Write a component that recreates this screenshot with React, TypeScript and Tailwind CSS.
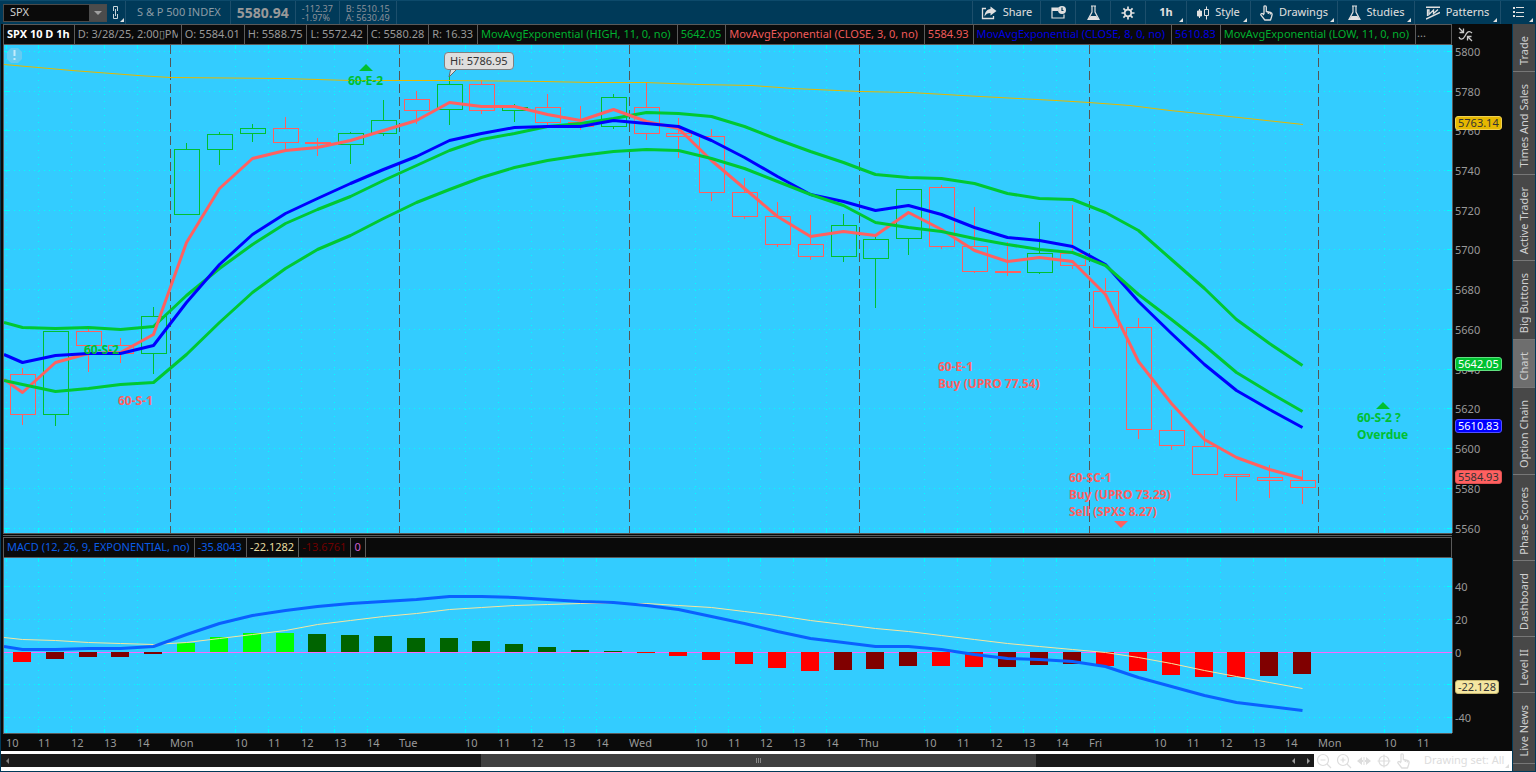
import type { ReactNode } from 'react';
import clsx from 'clsx';

// Both panes are drawn on one canvas, 1448 units wide
const PANE = { left: 4, width: 1448 };
const PRICE = { top: 45, height: 488 };
const MACD = { top: 558, height: 175 };

const BAR_STEP = 32.82;
const FIRST_BAR = 22.5;
const FIRST_GRID = 6;
const ZERO_Y = 652;

const barX = (i: number) => Math.floor(FIRST_BAR + BAR_STEP * i) + 0.5;
const gridX = (k: number) => Math.floor(FIRST_GRID + BAR_STEP * k);
const priceY = (price: number) => Math.floor(51.27 + (5800 - price) * 1.987) + 0.5;

const xPct = (x: number) => `${((x - PANE.left) / PANE.width) * 100}%`;
const yPct = (y: number, pane: { top: number; height: number }) => `${((y - pane.top) / pane.height) * 100}%`;

type Dir = 'u' | 'd';
type Candle = [Dir, number, number, number, number];

// direction, high, body top, body bottom, low
const candles: Candle[] = [
  ['d', 368, 374, 414, 425],
  ['u', 331, 331, 414, 426],
  ['d', 329, 331, 345, 372],
  ['d', 338, 345, 353, 363],
  ['u', 307, 316, 353, 374],
  ['u', 143, 149, 214, 214],
  ['u', 132, 134, 149, 165],
  ['u', 124, 128, 133, 142],
  ['d', 117, 128, 142, 150],
  ['d', 138, 142, 143, 156],
  ['u', 132, 133, 144, 164],
  ['u', 100, 120, 133, 136],
  ['d', 91, 99, 110, 124],
  ['u', 77, 84, 109, 125],
  ['d', 80, 84, 110, 114],
  ['u', 104, 107, 110, 122],
  ['d', 94, 107, 122, 125],
  ['d', 106, 122, 126, 130],
  ['u', 94, 97, 126, 129],
  ['d', 82, 107, 133, 140],
  ['d', 118, 133, 136, 158],
  ['d', 129, 136, 192, 201],
  ['d', 178, 192, 216, 219],
  ['d', 202, 216, 244, 247],
  ['d', 215, 244, 256, 260],
  ['u', 214, 225, 256, 262],
  ['u', 236, 239, 258, 308],
  ['u', 189, 189, 238, 255],
  ['d', 185, 187, 246, 249],
  ['d', 207, 246, 271, 273],
  ['d', 242, 271, 272, 276],
  ['u', 222, 253, 272, 274],
  ['d', 205, 253, 265, 269],
  ['d', 278, 291, 327, 329],
  ['d', 318, 327, 429, 439],
  ['d', 410, 430, 445, 450],
  ['d', 430, 446, 474, 475],
  ['d', 474, 474, 476, 501],
  ['d', 465, 477, 480, 498],
  ['d', 470, 480, 487, 504],
];

// The first value sits on the left edge, the rest on the bars
const emaClose3 = [
  379, 392, 362, 353, 352, 334, 242, 188, 158, 150, 147, 140, 130, 120, 102, 106, 106, 114, 120, 109, 121, 128, 160,
  188, 216, 236, 231, 235, 212, 229, 250, 261, 257, 261, 294, 361, 403, 439, 457, 469, 478,
];
const emaClose8 = [
  354, 362, 355, 353, 353, 345, 302, 264, 234, 213, 198, 183, 169, 156, 140, 133, 127, 126, 126, 120, 123, 126, 140,
  157, 176, 194, 201, 210, 205, 214, 227, 237, 240, 246, 264, 301, 333, 364, 390, 409, 427,
];
const emaHigh = [
  322, 327, 328, 327, 329, 326, 295, 268, 244, 223, 209, 196, 180, 165, 150, 139, 133, 126, 123, 118, 112, 113, 116,
  126, 139, 151, 162, 174, 177, 178, 183, 193, 198, 199, 212, 230, 259, 288, 319, 343, 365,
];
const emaLow = [
  380, 384, 391, 388, 384, 382, 354, 322, 292, 268, 249, 235, 218, 202, 189, 177, 167, 160, 155, 151, 149, 150, 158,
  168, 181, 194, 205, 222, 227, 231, 238, 244, 249, 252, 265, 294, 319, 345, 372, 392, 411,
];
const macdLine = [
  646, 649, 649, 648, 648, 646, 634, 623, 615, 610, 606, 603, 601, 599, 596, 596, 597, 599, 601, 602, 605, 609, 616,
  623, 631, 638, 642, 646, 646, 649, 654, 658, 659, 661, 666, 677, 686, 695, 702, 706, 710,
];
const signalLine = [
  637, 639, 640, 642, 643, 644, 642, 638, 634, 630, 624, 620, 616, 613, 609, 607, 605, 604, 603, 603, 603, 605, 607,
  611, 615, 620, 624, 628, 631, 635, 639, 643, 646, 649, 652, 657, 663, 670, 676, 682, 688,
];

const longAverage =
  '4,64 72,70 138,75 170,77 285,78 350,80 449,80 545,81 590,82 645,82 700,84 752,85 793,88 860,91 910,92 980,96 1056,100 1089,102 1130,105 1170,110 1220,115 1285,122 1303,124';

// colour, outer edge of the bar
const histogram: [string, number][] = [
  ['#ff0000', 662], ['#800000', 659], ['#800000', 657], ['#800000', 657], ['#800000', 654],
  ['#00ff00', 643], ['#00ff00', 637], ['#00ff00', 633], ['#00ff00', 633], ['#006400', 634],
  ['#006400', 635], ['#006400', 636], ['#006400', 638], ['#006400', 638], ['#006400', 641],
  ['#006400', 644], ['#006400', 647], ['#006400', 650], ['#006400', 651], ['#ff0000', 653],
  ['#ff0000', 656], ['#ff0000', 660], ['#ff0000', 664], ['#ff0000', 668], ['#ff0000', 671],
  ['#800000', 670], ['#800000', 669], ['#800000', 666], ['#ff0000', 666], ['#ff0000', 667],
  ['#800000', 667], ['#800000', 665], ['#800000', 664], ['#ff0000', 666], ['#ff0000', 671],
  ['#ff0000', 675], ['#ff0000', 677], ['#ff0000', 677], ['#800000', 676], ['#800000', 674],
];

const dayNames = ['Mon', 'Tue', 'Wed', 'Thu', 'Fri', 'Mon'];

interface TimeMark {
  x: number;
  label: string;
  session: boolean;
}

const timeMarks: TimeMark[] = [];
for (let k = 0; k < 44; k++) {
  const hour = (k + 2) % 7;
  if (hour === 1) continue;
  const session = hour === 0;
  timeMarks.push({
    x: gridX(k),
    label: session ? dayNames[(k - 5) / 7] : String(8 + hour),
    session,
  });
}

const prices = Array.from({ length: 13 }, (_, i) => 5800 - i * 20);
const macdLevels = [
  { label: '40', y: 586.5 },
  { label: '20', y: 619.5 },
  { label: '0', y: 652.5 },
  { label: '', y: 684.5 },
  { label: '-40', y: 717.5 },
];

const linePoints = (ys: number[]) =>
  ys.map((y, i) => (i === 0 ? `${PANE.left},${y + 0.5}` : `${barX(i - 1)},${y + 0.5}`)).join(' ');

interface LegendItem {
  text: string;
  color: string;
  study?: boolean;
}

const priceLegend: LegendItem[] = [
  { text: 'O: 5584.01', color: 'text-[#999999]' },
  { text: 'H: 5588.75', color: 'text-[#999999]' },
  { text: 'L: 5572.42', color: 'text-[#999999]' },
  { text: 'C: 5580.28', color: 'text-[#999999]' },
  { text: 'R: 16.33', color: 'text-[#999999]' },
  { text: 'MovAvgExponential (HIGH, 11, 0, no)', color: 'text-[#00b030]', study: true },
  { text: '5642.05', color: 'text-[#00b030]' },
  { text: 'MovAvgExponential (CLOSE, 3, 0, no)', color: 'text-[#f05a5a]', study: true },
  { text: '5584.93', color: 'text-[#f05a5a]' },
  { text: 'MovAvgExponential (CLOSE, 8, 0, no)', color: 'text-[#0000e0]', study: true },
  { text: '5610.83', color: 'text-[#0000e0]' },
  { text: 'MovAvgExponential (LOW, 11, 0, no)', color: 'text-[#00b030]', study: true },
];

const macdLegend: LegendItem[] = [
  { text: 'MACD (12, 26, 9, EXPONENTIAL, no)', color: 'text-[#0a5ce6]' },
  { text: '-35.8043', color: 'text-[#0a5ce6]' },
  { text: '-22.1282', color: 'text-[#e6dca0]' },
  { text: '-13.6761', color: 'text-[#700000]' },
  { text: '0', color: 'text-[#d060d0]' },
];

const sideTabs = [
  'Trade',
  'Times And Sales',
  'Active Trader',
  'Big Buttons',
  'Chart',
  'Option Chain',
  'Phase Scores',
  'Dashboard',
  'Level II',
  'Live News',
];

function Corner({ className = 'border-b-[#e0e0e0]' }: { className?: string }) {
  return <span className={clsx('absolute bottom-[2px] right-[3px] border-b-4 border-l-4 border-l-transparent', className)} />;
}

function ToolButton({ children, className, menu, label }: { children: ReactNode; className: string; menu?: boolean; label?: string }) {
  return (
    <button
      type="button"
      aria-label={label}
      className={clsx('relative flex h-full items-center justify-center gap-1.5 border-l border-[#1d4f6c] text-[#e0e0e0]', className)}
    >
      {children}
      {menu && <Corner />}
    </button>
  );
}

function ShareIcon() {
  return (
    <svg width="16" height="14" viewBox="0 0 16 14" fill="none">
      <path d="M5 2.5H1.5v10h11V10" stroke="#e0e0e0" strokeWidth="1.3" />
      <path d="M9.5 0.5 15.5 5l-6 4.500V7C6.500 7 5 8 3.500 10.500 3.800 6.500 5.500 3.500 9.500 3z" fill="#e0e0e0" />
    </svg>
  );
}

function NoteClockIcon() {
  return (
    <svg width="15" height="13" viewBox="0 0 15 13" fill="none">
      <path d="M8 2H1v10h12V8.500" stroke="#e0e0e0" strokeWidth="1.200" />
      <path d="M1 2h6v3H1z" fill="#e0e0e0" />
      <circle cx="11" cy="4" r="4" fill="#e0e0e0" />
      <path d="M11 1.500v3h1.500" stroke="#003a59" strokeWidth="1.200" />
    </svg>
  );
}

function FlaskIcon() {
  return (
    <svg width="13" height="16" viewBox="0 0 13 16" fill="none">
      <path d="M4 1h5M5 1v6L1 14.500h11L8 7V1" stroke="#e0e0e0" strokeWidth="1.200" />
      <path d="M3.500 11h6L12 15H1z" fill="#e0e0e0" />
    </svg>
  );
}

function GearIcon() {
  return (
    <svg width="14" height="14" viewBox="0 0 14 14" fill="none" stroke="#e0e0e0">
      <circle cx="7" cy="7" r="3.300" strokeWidth="1.800" />
      <path
        d="M7 0.500v3M7 10.500v3M0.500 7h3M10.500 7h3M2.400 2.400l2 2M9.600 9.600l2 2M11.600 2.400l-2 2M4.400 9.600l-2 2"
        strokeWidth="1.700"
      />
    </svg>
  );
}

function CandlesIcon() {
  return (
    <svg width="12" height="14" viewBox="0 0 12 14" fill="none" stroke="#e0e0e0">
      <path d="M2.500 3v9M9.500 0.500v13" strokeWidth="1" />
      <path d="M0.500 5h4v5h-4z" fill="#e0e0e0" />
      <path d="M7.500 3.500h4v6h-4z" fill="#003a59" />
    </svg>
  );
}

function HandIcon({ color = '#e0e0e0' }: { color?: string }) {
  return (
    <svg width="13" height="16" viewBox="0 0 13 16" fill="none" stroke={color} strokeWidth="1.300" strokeLinejoin="round">
      <path d="M4 9V2c0-1.600 2.300-1.600 2.300 0v4.500l4.200 1c1.100.300 1.700 1 1.600 2L11.500 12l-1 3H4.800L1 10.200c-.700-1.200.800-2.200 1.800-1.400L4 10" />
      <path d="M8.300 7v2M10.300 7.500v2" />
    </svg>
  );
}

function PatternsIcon() {
  return (
    <svg width="14" height="14" viewBox="0 0 14 14" fill="none" stroke="#e0e0e0" strokeWidth="1.400">
      <path d="M0 1.200h14M0 13 14 6.500" />
      <path d="M1.500 10V4H3v4.500L7.500 4v3.500L12 3.500" strokeWidth="1.300" />
    </svg>
  );
}

function ListIcon() {
  return (
    <svg width="11" height="11" viewBox="0 0 11 11" fill="#e0e0e0">
      <path d="M0 0h2v2H0zM3 0h8v1H3zM0 4h2v2H0zM3 5h8v1H3zM0 8h2v2H0zM3 9h8v1H3z" />
    </svg>
  );
}

function LinkIcon() {
  return (
    <svg width="6" height="13" viewBox="0 0 6 13" fill="none" stroke="#c8d4da">
      <path d="M0.500 5V0.500h4V5M0.500 8v4.500h4V8M2.500 3v7" />
    </svg>
  );
}

function TopBar() {
  return (
    <header className="flex h-6 shrink-0 items-center border-t border-[#0d4a6b] bg-[#003a59]">
      <div className="ml-[3px] flex h-[18px] w-[104px] items-center border border-[#4a4a4a] bg-[#0a0a0a]">
        <input
          aria-label="Symbol"
          defaultValue="SPX"
          className="w-full min-w-0 bg-transparent pl-[6px] text-[11px] text-[#d0d0d0] outline-none"
        />
        <button type="button" aria-label="Symbol list" className="flex h-4 w-[17px] shrink-0 items-center justify-center bg-[#4c4c4c]">
          <span className="border-x-4 border-t-4 border-x-transparent border-t-[#a0a0a0]" />
        </button>
      </div>
      <button type="button" aria-label="Link symbol" className="relative flex h-full w-[18px] items-center justify-center">
        <LinkIcon />
        <span className="absolute right-px bottom-[2px] border-b-4 border-l-4 border-b-[#e0e0e0] border-l-transparent" />
      </button>
      <div className="flex h-full items-center border-l border-[#1d4f6c] pr-[9px] pl-[11px] text-[#8b9ba5]">S &amp; P 500 INDEX</div>
      <div className="flex h-full items-center border-l border-[#1d4f6c] px-[6px] text-sm font-bold text-[#999999]">5580.94</div>
      <div className="flex h-full flex-col justify-center border-l border-[#1d4f6c] px-[6px] text-[9px] leading-[9px] text-[#8b9199]">
        <span>-112.37</span>
        <span>-1.97%</span>
      </div>
      <div className="flex h-full flex-col justify-center border-x border-[#1d4f6c] px-[6px] text-[9px] leading-[9px] text-[#8b9199]">
        <span>B: 5510.15</span>
        <span>A: 5630.49</span>
      </div>

      <div className="ml-auto flex h-full">
        <ToolButton className="w-[68px]">
          <ShareIcon />
          <span>Share</span>
        </ToolButton>
        <ToolButton className="w-[35px]" label="Notes">
          <NoteClockIcon />
        </ToolButton>
        <ToolButton className="w-[35px]" label="Edit studies">
          <FlaskIcon />
        </ToolButton>
        <ToolButton className="w-[35px]" label="Settings">
          <GearIcon />
        </ToolButton>
        <ToolButton className="w-[41px]" menu>
          <span className="font-bold">1h</span>
        </ToolButton>
        <ToolButton className="w-[64px]" menu>
          <CandlesIcon />
          <span>Style</span>
        </ToolButton>
        <ToolButton className="w-[87px]" menu>
          <HandIcon />
          <span>Drawings</span>
        </ToolButton>
        <ToolButton className="w-[77px]" menu>
          <FlaskIcon />
          <span>Studies</span>
        </ToolButton>
        <ToolButton className="w-[86px]" menu>
          <PatternsIcon />
          <span>Patterns</span>
        </ToolButton>
        <ToolButton className="w-[36px]" menu label="Menu">
          <ListIcon />
        </ToolButton>
      </div>
    </header>
  );
}

function LegendCell({ text, color, study }: LegendItem) {
  return (
    <div
      className={clsx(
        'flex h-full shrink-0 items-center border-r border-[#5a5a5a] pl-[3px] whitespace-nowrap',
        study ? 'pr-[6px]' : 'pr-1',
        color,
      )}
    >
      {text}
    </div>
  );
}

function Grid({ pane, levels }: { pane: { top: number; height: number }; levels: number[] }) {
  const right = PANE.left + PANE.width;
  const bottom = pane.top + pane.height;
  return (
    <g stroke="#00ffff" shapeRendering="crispEdges">
      {levels.map((y) => (
        <g key={y}>
          <line x1={PANE.left} x2={right} y1={y} y2={y} strokeDasharray="1 4" />
          <path d={`M${PANE.left} ${y}h5M${right - 5} ${y}h5`} />
        </g>
      ))}
      {timeMarks
        .filter((m) => !m.session)
        .map((m) => (
          <g key={m.x}>
            <line x1={m.x + 0.5} x2={m.x + 0.5} y1={pane.top} y2={bottom} strokeDasharray="1 6" />
            <path d={`M${m.x + 0.5} ${pane.top}v4M${m.x + 0.5} ${bottom - 4}v4`} />
          </g>
        ))}
    </g>
  );
}

function Study({ ys, color, width = 3 }: { ys: number[]; color: string; width?: number }) {
  return <polyline points={linePoints(ys)} fill="none" stroke={color} strokeWidth={width} strokeLinejoin="round" />;
}

function Note({ x, y, up, children }: { x: number; y: number; up?: boolean; children: ReactNode }) {
  return (
    <div
      className={clsx('absolute text-xs leading-[17px] font-bold whitespace-nowrap', up ? 'text-[#00c030]' : 'text-[#ff6060]')}
      style={{ left: xPct(x), top: yPct(y, PRICE) }}
    >
      {children}
    </div>
  );
}

function PricePane() {
  return (
    <div className="relative min-w-0 flex-1 overflow-hidden border-b border-[#5a5a5a] bg-[#33ccff]">
      <svg
        className="absolute inset-0 h-full w-full"
        viewBox={`${PANE.left} ${PRICE.top} ${PANE.width} ${PRICE.height}`}
        preserveAspectRatio="none"
      >
        <Grid pane={PRICE} levels={prices.map(priceY)} />
        <g stroke="#555555" strokeDasharray="9 4" shapeRendering="crispEdges">
          {timeMarks
            .filter((m) => m.session)
            .map((m) => (
              <line key={m.x} x1={m.x + 0.5} x2={m.x + 0.5} y1={PRICE.top} y2={PRICE.top + PRICE.height} />
            ))}
        </g>
        <g fill="none" shapeRendering="crispEdges">
          {candles.map(([dir, hi, top, bottom, lo], i) => {
            const x = barX(i);
            return (
              <path
                key={i}
                stroke={dir === 'u' ? '#00c030' : '#ff6060'}
                d={`M${x} ${hi}V${top}M${x - 12} ${top + 0.5}h25v${bottom - top}h-25zM${x} ${bottom}V${lo}`}
              />
            );
          })}
        </g>
        <polyline points={longAverage} fill="none" stroke="#e6b800" strokeWidth="1" transform="translate(0 0.5)" />
        <Study ys={emaHigh} color="#00c832" />
        <Study ys={emaClose3} color="#ff6060" />
        <Study ys={emaClose8} color="#0000ff" />
        <Study ys={emaLow} color="#00c832" />
        <path d="M359 71h14l-7-7zM1376 409h14l-7-7z" fill="#00c030" />
        <path d="M1114 521h14l-7 7z" fill="#ff6060" />
        <path d="M451 68l-2 9 9-9" fill="#dedede" stroke="#666666" />
        <path d="M11 48h7l4 4v7l-4 4h-7l-4-4v-7z" fill="#66ccf2" />
        <path d="M14.500 50v6M14.500 58v2" stroke="#c4ecfb" strokeWidth="2" />
      </svg>
      <Note x={348} y={72} up>60-E-2</Note>
      <Note x={84} y={341} up>60-S-2</Note>
      <Note x={118} y={392}>60-S-1</Note>
      <Note x={938} y={358}>
        60-E-1
        <br />
        Buy (UPRO 77.54)
      </Note>
      <Note x={1069} y={469}>
        60-SC-1
        <br />
        Buy (UPRO 73.29)
        <br />
        Sell (SPXS 8.27)
      </Note>
      <Note x={1357} y={409} up>
        60-S-2 ?
        <br />
        Overdue
      </Note>
      <div
        className="absolute flex h-[18px] items-center rounded-[4px] border border-[#808080] bg-[#dedede] px-[5px] whitespace-nowrap text-[#333333]"
        style={{ left: xPct(444), top: yPct(52, PRICE) }}
      >
        Hi: 5786.95
      </div>
    </div>
  );
}

function MacdPane() {
  return (
    <div className="relative min-w-0 flex-1 overflow-hidden border-b border-[#5a5a5a] bg-[#33ccff]">
      <svg
        className="absolute inset-0 h-full w-full"
        viewBox={`${PANE.left} ${MACD.top} ${PANE.width} ${MACD.height}`}
        preserveAspectRatio="none"
      >
        <Grid pane={MACD} levels={macdLevels.filter((l) => l.label !== '0').map((l) => l.y)} />
        <line x1="4" x2="1452" y1="652.5" y2="652.5" stroke="#ff66ff" shapeRendering="crispEdges" />
        {histogram.map(([color, edge], i) => (
          <rect
            key={i}
            x={barX(i) - 9.5}
            width="18"
            y={Math.min(edge, ZERO_Y)}
            height={Math.abs(edge - ZERO_Y)}
            fill={color}
            shapeRendering="crispEdges"
          />
        ))}
        <Study ys={signalLine} color="#f5e6a0" width={1} />
        <Study ys={macdLine} color="#0a60ff" />
      </svg>
    </div>
  );
}

function AxisLabel({ y, pane, children }: { y: number; pane: { top: number; height: number }; children: ReactNode }) {
  return (
    <span className="absolute left-[2px] -translate-y-1/2 leading-[14px]" style={{ top: yPct(y, pane) }}>
      {children}
    </span>
  );
}

function AxisTag({ y, pane, color, children }: { y: number; pane: { top: number; height: number }; color: string; children: ReactNode }) {
  return (
    <span
      className={clsx('absolute left-[2px] flex h-[14px] -translate-y-1/2 items-center rounded-[3px] border px-[2px]', color)}
      style={{ top: yPct(y, pane) }}
    >
      {children}
    </span>
  );
}

function ScrollRow() {
  return (
    <div className="flex h-[20px] shrink-0 items-center bg-white pb-px">
      <div className="flex h-[13px] min-w-0 flex-1 items-center bg-[#1a1a1a]">
        <button type="button" aria-label="Scroll left" className="flex h-full w-3 items-center justify-center">
          <span className="border-y-[3px] border-r-[3px] border-y-transparent border-r-[#808080]" />
        </button>
        <div className="h-full flex-[468]" />
        <div className="flex h-full flex-[555] items-center justify-center gap-px bg-[#404040]">
          <span className="h-[5px] w-px bg-[#888888]" />
          <span className="h-[5px] w-px bg-[#888888]" />
          <span className="h-[5px] w-px bg-[#888888]" />
        </div>
        <div className="flex h-full flex-[274] items-center justify-end gap-3 pr-1">
          <button type="button" aria-label="Step left" className="border-y-[3px] border-r-[3px] border-y-transparent border-r-[#999999]" />
          <button type="button" aria-label="Step right" className="border-y-[3px] border-l-[3px] border-y-transparent border-l-[#999999]" />
        </div>
      </div>
      <div className="relative flex h-full w-[198px] shrink-0 items-center gap-1 pl-[2px] text-[#dddddd]">
        <button type="button" aria-label="Zoom out">
          <svg width="16" height="18" viewBox="0 0 16 18" fill="none" stroke="#dddddd" strokeWidth="1.200">
            <circle cx="7" cy="8" r="5.500" />
            <path d="M4.500 8h5M11 12l4 4" />
          </svg>
        </button>
        <button type="button" aria-label="Zoom in">
          <svg width="16" height="18" viewBox="0 0 16 18" fill="none" stroke="#dddddd" strokeWidth="1.200">
            <circle cx="7" cy="8" r="5.500" />
            <path d="M4.500 8h5M7 5.500v5M11 12l4 4" />
          </svg>
        </button>
        <button type="button" aria-label="Stretch">
          <svg width="16" height="18" viewBox="0 0 16 18" fill="#dddddd">
            <path d="M1 9l5-4v3h1v2H6v3zM15 9l-5-4v3H9v2h1v3zM7.500 5h1v8h-1z" />
          </svg>
        </button>
        <button type="button" aria-label="Crosshair">
          <svg width="16" height="18" viewBox="0 0 16 18" fill="none" stroke="#dddddd" strokeWidth="1.200">
            <circle cx="8" cy="9" r="5" />
            <path d="M8 2.500v13M1.500 9h13" />
          </svg>
        </button>
        <button type="button" aria-label="Pointer" className="pl-px">
          <HandIcon color="#dddddd" />
        </button>
        <button type="button" className="pl-[10px] whitespace-nowrap">
          Drawing set: All
        </button>
        <Corner className="border-b-[#dddddd]" />
      </div>
    </div>
  );
}

export default function App() {
  return (
    <div className="flex h-screen flex-col overflow-hidden border-b border-[#003a59] bg-[#0a0a0a] font-['Noto_Sans',sans-serif] text-[11px] text-[#999999]">
      <TopBar />
      <div className="flex min-h-0 flex-1 border-l border-[#003a59]">
        <main className="flex min-w-0 flex-1 flex-col">
          {/* Price chart */}
          <div className="flex h-[21px] shrink-0 pl-[2px]">
            <div className="flex min-w-0 flex-1 overflow-hidden border border-[#5a5a5a]">
              <LegendCell text="SPX 10 D 1h" color="font-bold text-white" />
              <div className="flex h-full w-[107px] shrink-0 items-center border-r border-[#5a5a5a] px-[3px]">
                <span className="overflow-hidden whitespace-nowrap">D: 3/28/25, 2:00▯PM</span>
              </div>
              {priceLegend.map((item) => (
                <LegendCell key={item.text} {...item} />
              ))}
              <span className="pl-px">...</span>
            </div>
            <div className="flex w-[60px] shrink-0 items-center pl-[6px]">
              <svg width="16" height="16" viewBox="0 0 16 16" fill="none" stroke="#c8c8c8" strokeWidth="1.300">
                <path d="M1 10c1 3 4 3 6-1s4-6 7-3" />
                <path d="M1 1l4 4M5.500 1.500v4h-4M14 14l-4-4M9.500 13.500v-4h4" />
              </svg>
            </div>
          </div>
          <div className="flex min-h-0 flex-1 pl-[2px]">
            <div className="flex min-w-0 flex-1 border-l border-[#5a5a5a]">
              <PricePane />
            </div>
            <div className="relative mb-px w-[60px] shrink-0 border-l border-[#5a5a5a]">
              {prices.map((p) => (
                <AxisLabel key={p} y={priceY(p) + 0.5} pane={PRICE}>
                  {p}
                </AxisLabel>
              ))}
              <AxisTag y={123} pane={PRICE} color="border-[#f0d050] bg-[#e6b800] text-[#333333]">5763.14</AxisTag>
              <AxisTag y={364} pane={PRICE} color="border-[#60e080] bg-[#00c030] text-white">5642.05</AxisTag>
              <AxisTag y={426} pane={PRICE} color="border-[#5050ff] bg-[#0000ff] text-white">5610.83</AxisTag>
              <AxisTag y={477} pane={PRICE} color="border-[#e05050] bg-[#ff6060] text-[#333333]">5584.93</AxisTag>
            </div>
          </div>

          {/* MACD */}
          <div className="mt-px mr-[60px] ml-[2px] h-[2px] shrink-0 border-t border-[#5a5a5a]" />
          <div className="flex h-[21px] shrink-0 pl-[2px]">
            <div className="flex min-w-0 flex-1 overflow-hidden border border-[#5a5a5a]">
              {macdLegend.map((item) => (
                <LegendCell key={item.text} {...item} />
              ))}
            </div>
            <div className="w-[60px] shrink-0" />
          </div>
          <div className="flex h-[176px] shrink-0 pl-[2px]">
            <div className="flex min-w-0 flex-1 border-l border-[#5a5a5a]">
              <MacdPane />
            </div>
            <div className="relative mb-px w-[60px] shrink-0 border-l border-[#5a5a5a]">
              {macdLevels.map((l) => (
                <AxisLabel key={l.y} y={l.y + 0.5} pane={MACD}>
                  {l.label}
                </AxisLabel>
              ))}
              <AxisTag y={687} pane={MACD} color="border-[#c8b870] bg-[#f5e6a0] text-[#333333]">-22.128</AxisTag>
            </div>
          </div>
          <div className="flex h-[17px] shrink-0 pl-[3px]">
            <div className="relative flex-1">
              {timeMarks.map((m) => (
                <span key={m.x} className="absolute top-px leading-4" style={{ left: xPct(m.x) }}>
                  {m.label}
                </span>
              ))}
            </div>
            <div className="w-[60px] shrink-0" />
          </div>
          <ScrollRow />
        </main>

        <nav className="flex w-6 shrink-0 flex-col border-x border-[#003a59] bg-[#484848]">
          {sideTabs.map((tab) => (
            <button
              key={tab}
              type="button"
              className={clsx(
                'flex shrink-0 justify-center border-b border-[#777777] pt-3 pb-[6px] text-[#d0d0d0]',
                tab === 'Chart' && 'bg-[#6e6e6e]',
              )}
            >
              <span className="rotate-180 leading-5 [writing-mode:vertical-rl]">{tab}</span>
            </button>
          ))}
        </nav>
      </div>
    </div>
  );
}
